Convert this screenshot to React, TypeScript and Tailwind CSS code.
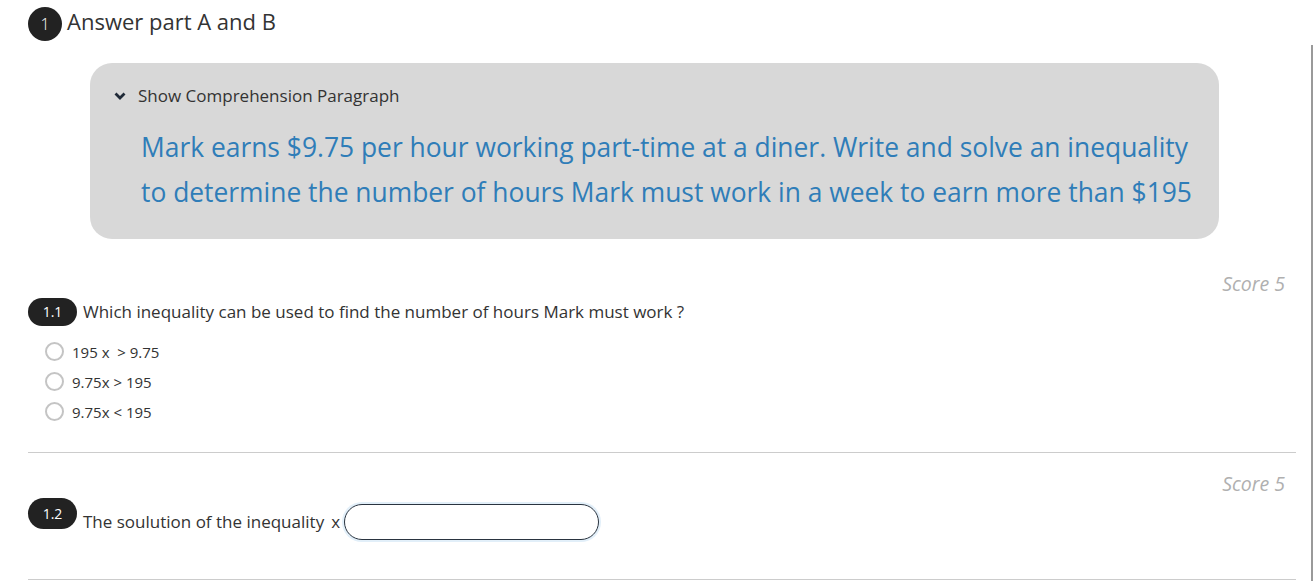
import React from "react";

const font = { fontFamily: '"Open Sans", "Noto Sans", sans-serif' };

function Badge({ label, h = "h-[28px]" }: { label: string; h?: string }) {
  return (
    <div className={`flex ${h} w-[49px] shrink-0 items-center justify-center rounded-full bg-[#222222] text-[14px] text-white`}>
      {label}
    </div>
  );
}

function Radio({ label }: { label: string }) {
  return (
    <label className="flex h-[30px] items-center gap-[8px] pl-[17px]">
      <span className="h-[19px] w-[19px] rounded-full border-[2px] border-[#c4c4c4] bg-white" />
      <span className="whitespace-pre text-[15px] text-[#333333]">{label}</span>
    </label>
  );
}

export default function App() {
  return (
    <div className="relative min-h-[581px] w-[1314px] overflow-hidden bg-white" style={font}>
      <div className="absolute right-[1px] top-[45px] bottom-0 w-[2px] bg-[#9a9a9a]" />
      <div className="w-[1296px] pl-[28px]">
        {/* Heading */}
        <div className="flex items-center gap-[5px] pt-[7px]">
          <div className="flex h-[34px] w-[34px] items-center justify-center rounded-full bg-[#222222] text-[16px] font-light text-white">1</div>
          <div className="-mt-[6px] text-[22px] font-medium text-[#333333]">Answer part A and B</div>
        </div>

        {/* Comprehension */}
        <div className="ml-[62px] mr-[77px] mt-[22px] rounded-[22px] bg-[#d8d8d8] pb-[24px] pl-[24px] pr-[14px] pt-[20px]">
          <div className="flex items-center gap-[12px]">
            <svg width="12" height="12" viewBox="0 0 12 12">
              <path d="M1.5 3.5 L6 8 L10.5 3.5" fill="none" stroke="#1f2937" strokeWidth="2.8" />
            </svg>
            <span className="text-[17px] font-medium text-[#333333]">Show Comprehension Paragraph</span>
          </div>
          <p className="mt-[16px] pl-[27px] text-[26.4px] leading-[45px] text-[#2f7db8]">
            Mark earns $9.75 per hour working part-time at a diner. Write and solve an inequality to determine the number of hours Mark must work in a week to earn more than $195
          </p>
        </div>

        {/* 1.1 */}
        <div className="mt-[30px] flex justify-end pr-[11px] text-[19.5px] italic text-[#b0b0b0]">Score 5</div>
        <div className="flex items-center gap-[6px]">
          <Badge label="1.1" />
          <span className="text-[17px] font-medium text-[#333333]">Which inequality can be used to find the number of hours Mark must work ?</span>
        </div>
        <div className="mt-[11px] flex flex-col">
          <Radio label="195 x  > 9.75" />
          <Radio label="9.75x > 195" />
          <Radio label="9.75x < 195" />
        </div>
        <div className="mt-[25px] h-px bg-[#cccccc]" />

        {/* 1.2 */}
        <div className="mt-[16px] flex justify-end pr-[11px] text-[19.5px] italic text-[#b0b0b0]">Score 5</div>
        <div className="flex items-start gap-[6px]">
          <Badge label="1.2" h="h-[31px]" />
          <div className="mt-[6px] flex items-center">
            <span className="-mt-[1px] text-[17px] font-medium text-[#333333]">The soulution of the inequality</span>
            <span className="-mt-[1px] ml-[7px] mr-[4px] text-[17px] text-[#333333]">x</span>
            <div className="h-[36px] w-[255px] rounded-full border border-[#2a3440] bg-white shadow-[0_0_0_2px_rgba(140,190,230,0.25)]" />
          </div>
        </div>
        <div className="mt-[39px] h-px bg-[#cccccc]" />
      </div>
    </div>
  );
}
